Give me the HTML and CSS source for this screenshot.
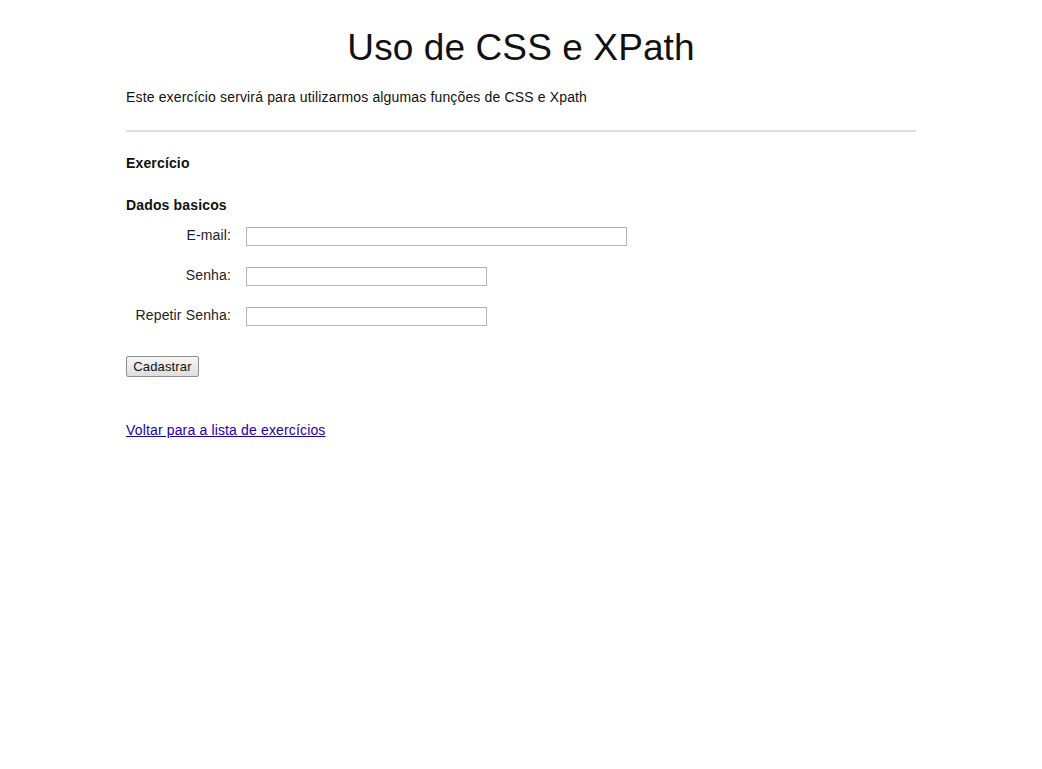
FILE: index.html
```html
<!DOCTYPE html>
<html lang="pt">
<head>
<meta charset="utf-8">
<title>Uso de CSS e XPath</title>
<link rel="stylesheet" href="styles.css">
</head>
<body>
<div class="container">
  <h1 class="title">Uso de CSS e XPath</h1>
  <p class="intro">Este exercício servirá para utilizarmos algumas funções de CSS e Xpath</p>
  <hr class="divider">
  <h2 class="section">Exercício</h2>
  <form class="form">
    <h3 class="legend">Dados basicos</h3>
    <div class="row">
      <label class="label" for="email">E-mail:</label>
      <input class="field field-wide" id="email" type="text">
    </div>
    <div class="row">
      <label class="label" for="senha">Senha:</label>
      <input class="field" id="senha" type="password">
    </div>
    <div class="row">
      <label class="label" for="senha2">Repetir Senha:</label>
      <input class="field" id="senha2" type="password">
    </div>
    <button class="btn" type="button">Cadastrar</button>
  </form>
  <a class="back" href="#">Voltar para a lista de exercícios</a>
</div>
</body>
</html>
```
FILE: styles.css
```css
html, body {
  margin: 0;
  padding: 0;
  background: #fff;
}
body {
  font-family: "Liberation Sans", Arial, sans-serif;
  font-size: 14px;
  letter-spacing: 0.15px;
  color: #111;
}
.container {
  width: 790px;
  margin: 0 auto;
  display: flex;
  flex-direction: column;
  align-items: flex-start;
}
.title {
  align-self: stretch;
  text-align: center;
  font-size: 37px;
  font-weight: normal;
  letter-spacing: 0.1px;
  line-height: 44px;
  margin: 26px 0 0;
  color: #111;
}
.intro {
  margin: 19px 0 0;
  line-height: 16px;
}
.divider {
  align-self: stretch;
  border: 0;
  height: 2px;
  background: #ddd;
  margin: 25px 0 0;
}
.section {
  font-size: 14px;
  font-weight: bold;
  line-height: 16px;
  margin: 23px 0 0;
}
.form {
  display: flex;
  flex-direction: column;
  align-items: flex-start;
}
.legend {
  font-size: 14px;
  font-weight: bold;
  line-height: 16px;
  margin: 26px 0 0;
}
.row {
  display: flex;
  align-items: center;
  gap: 15px;
  margin-top: 14px;
}
.row + .row {
  margin-top: 21px;
}
.label {
  width: 105px;
  text-align: right;
  line-height: 16px;
  padding-bottom: 3px;
  color: #222;
}
.field {
  box-sizing: border-box;
  width: 241px;
  height: 19px;
  border: 1px solid #b5b5b5;
  padding: 1px 2px;
  margin: 0;
  font: 13px "Liberation Sans", Arial, sans-serif;
  background: #fff;
}
.field-wide {
  width: 381px;
}
.btn {
  box-sizing: border-box;
  margin-top: 30px;
  height: 21px;
  width: 73px;
  padding: 0 4px;
  font: 13px "Liberation Sans", Arial, sans-serif;
  letter-spacing: 0.15px;
  color: #111;
  border: 1px solid #8f8f8f;
  border-radius: 2px;
  background: linear-gradient(#f6f6f6, #dedede);
}
.back {
  margin-top: 45px;
  color: #2200aa;
  line-height: 16px;
  text-decoration: underline;
}
```
